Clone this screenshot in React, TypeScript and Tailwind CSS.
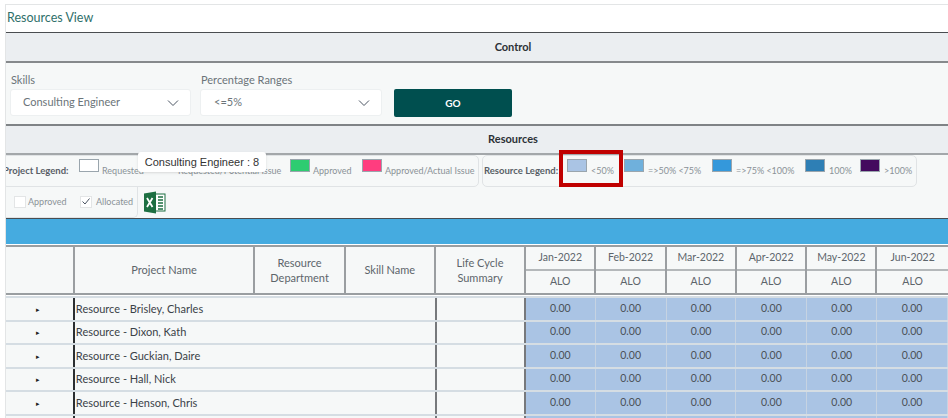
const months = ["Jan-2022", "Feb-2022", "Mar-2022", "Apr-2022", "May-2022", "Jun-2022"];
const resources = ["Brisley, Charles", "Dixon, Kath", "Guckian, Daire", "Hall, Nick", "Henson, Chris", ""];
const monthWidths = ["w-[70px]", "w-[71px]", "w-[70px]", "w-[71px]", "w-[70px]", "w-[71px]"];

function Chevron() {
  return (
    <svg width="12" height="8" viewBox="0 0 12 8" fill="none" stroke="#4b5563" strokeWidth="1">
      <path d="M1 1.5 6 6.5 11 1.5" />
    </svg>
  );
}

function Select({ label, value, width, pad }: { label: string; value: string; width: string; pad: string }) {
  return (
    <div className={`${width} flex flex-col`}>
      <span className="text-[11px] leading-[16px] text-[#6b7479] pl-px">{label}</span>
      <div className={`h-[27px] mt-px bg-white rounded-[3px] border border-[#edf0f1] flex items-center justify-between ${pad} pr-[11px] text-[11px] text-[#6b7479]`}>
        <span>{value}</span>
        <Chevron />
      </div>
    </div>
  );
}

function Swatch({ color, label, width, gap }: { color: string; label: string; width: string; gap: string }) {
  return (
    <div className={`flex items-start shrink-0 ${width} ${gap}`}>
      <span className="w-5 h-[13px] shrink-0 border border-[#9aa5ad]" style={{ backgroundColor: color }} />
      <span className="text-[9px] leading-[13px] mt-[5px] text-[#8a9297] whitespace-nowrap">{label}</span>
    </div>
  );
}

function ExcelIcon() {
  return (
    <svg width="23" height="23" viewBox="0 0 23 23">
      <rect x="8" y="3" width="14" height="17" fill="#fff" stroke="#1d6f42" strokeWidth="1" />
      <path d="M15 6h5M15 9h5M15 12h5M15 15h5M15 18h5" stroke="#1d6f42" strokeWidth="1.6" />
      <path d="M10 6h3M10 9h3M10 12h3M10 15h3M10 18h3" stroke="#1d6f42" strokeWidth="1.6" />
      <path d="M1 2.5 13 0.5V22.5L1 20.5Z" fill="#1d6f42" />
      <path d="M4 7 9.5 16M9.5 7 4 16" stroke="#fff" strokeWidth="1.8" />
    </svg>
  );
}

function SectionBar({ title, top }: { title: string; top: string }) {
  return (
    <div className={`h-[29px] bg-[#ebeef1] border-t ${top} flex items-center justify-center pl-[72px] text-[11px] font-bold text-[#2b3136]`}>
      {title}
    </div>
  );
}

export default function App() {
  return (
    <div className="w-[948px] h-[418px] overflow-hidden bg-white pt-1 pl-[6px] relative font-['Lato',sans-serif]">
      <div className="border-t border-l border-[#e3e5e6] -ml-px">
        <div className="h-[27px] flex items-center pl-px text-[12.5px] text-[#2f6f6a]">Resources View</div>
        <SectionBar title="Control" top="border-[#4a4d50]" />

        <div className="h-[63px] bg-[#f6f8f8] border-t-2 border-[#86898c] flex items-start pl-[4px] pt-[9px]">
          <Select label="Skills" value="Consulting Engineer" width="w-[181px]" pad="pl-3" />
          <div className="w-[9px]" />
          <Select label="Percentage Ranges" value="<=5%" width="w-[182px]" pad="pl-[13px]" />
          <div className="w-[12px]" />
          <div className="w-[118px] h-[28px] mt-[17px] bg-[#004f4f] rounded-[2px] flex items-center justify-center text-[10px] font-bold text-white">GO</div>
        </div>

        <SectionBar title="Resources" top="border-t-2 border-[#7f8386]" />

        <div className="h-[65px] bg-[#f6f8f8] border-t-2 border-[#a3a7aa] overflow-hidden">
          <div className="flex h-[32px] -ml-[4px]">
            <div className="w-[477px] shrink-0 border border-[#e0e3e5] rounded-[5px] flex items-start pt-[3px]">
              <span className="text-[9.5px] font-bold text-[#596067] mt-[5px] w-[76px] leading-[13px] whitespace-nowrap">Project Legend:</span>
              <Swatch color="#ffffff" label="Requested" gap="gap-[3px]" width="w-[76px]" />
              <Swatch color="#ffffff" label="Requested/Potential Issue" gap="gap-[3px]" width="w-[135px]" />
              <Swatch color="#2ecc71" label="Approved" gap="gap-[3px]" width="w-[72px]" />
              <Swatch color="#ff3d7f" label="Approved/Actual Issue" gap="gap-[3px]" width="w-[112px]" />
            </div>
            <div className="w-[435px] shrink-0 ml-[3px] border border-[#e0e3e5] rounded-[5px] flex items-start pl-px pt-[3px]">
              <span className="text-[9.5px] font-bold text-[#596067] mt-[5px] w-[83px] leading-[13px] whitespace-nowrap">Resource Legend:</span>
              <Swatch color="#aac4e4" label="<50%" gap="gap-[4px]" width="w-[57px]" />
              <Swatch color="#6fb0dc" label="=>50% <75%" gap="gap-[4px]" width="w-[88px]" />
              <Swatch color="#3498db" label="=>75% <100%" gap="gap-[4px]" width="w-[93px]" />
              <Swatch color="#2e7fb5" label="100%" gap="gap-[4px]" width="w-[55px]" />
              <Swatch color="#440a5e" label=">100%" gap="gap-[4px]" width="w-[50px]" />
            </div>
          </div>
          <div className="flex items-center h-[31px]">
            <div className="w-[132px] h-[32px] -mt-px border-r border-b border-[#e0e3e5] rounded-br-[5px] flex items-center pl-[8px] text-[9px] text-[#8a9297]">
              <span className="w-[12px] h-[12px] bg-white border border-[#e3e5e6]" />
              <span className="ml-[2px] w-[52px]">Approved</span>
              <span className="w-[12px] h-[12px] bg-white border border-[#e3e5e6] flex items-center justify-center">
                <svg width="8" height="7" viewBox="0 0 8 7" fill="none" stroke="#4b5563" strokeWidth="1">
                  <path d="M0.5 3.5 3 6 7.5 0.5" />
                </svg>
              </span>
              <span className="ml-[4px]">Allocated</span>
            </div>
            <div className="ml-[5px]">
              <ExcelIcon />
            </div>
          </div>
        </div>

        <div className="h-[26px] bg-[#45abe0] border-t border-[#4a4d50]" />

        <div className="flex h-[50px] bg-[#f6f8f8] border-t-2 border-b-2 border-[#9a9ea1] text-[11px] leading-[15.5px] text-[#5d656b] text-center mt-px">
          <div className="w-[69px] border-r-2 border-[#9a9ea1]" />
          <div className="w-[181px] border-r-2 border-[#9a9ea1] flex items-center justify-center">Project Name</div>
          <div className="w-[91px] border-r-2 border-[#9a9ea1] flex items-center justify-center">Resource<br />Department</div>
          <div className="w-[90px] border-r-2 border-[#9a9ea1] flex items-center justify-center">Skill Name</div>
          <div className="w-[91px] border-r-2 border-[#9a9ea1] flex items-center justify-center">Life Cycle<br />Summary</div>
          {months.map((m, i) => (
            <div key={m} className={`${monthWidths[i]} border-r-2 border-[#9a9ea1] flex flex-col text-[10.5px] last:border-r-0`}>
              <div className="h-[24px] border-b-2 border-[#b4b8ba] flex items-center justify-center">{m}</div>
              <div className="flex-1 flex items-center justify-center">ALO</div>
            </div>
          ))}
        </div>

        <div className="mt-px">
          {resources.map((name, r) => (
            <div key={r} className="flex h-[23.5px] bg-[#f6f8f8] border-t-2 border-[#d5dde3] text-[11px] text-[#3b4248]">
              <div className="w-[69px] border-r-2 border-[#2b2e31] flex items-center justify-center pr-[2px]">
                <span className="text-[7px] text-[#222]">▸</span>
              </div>
              <div className="w-[361px] pl-px flex items-center whitespace-nowrap">{name ? `Resource - ${name}` : ""}</div>
              <div className="w-[91px] border-l-2 border-r-2 border-[#77797c]" />
              {months.map((m, i) => (
                <div key={m} className={`${monthWidths[i]} bg-[#aac4e4] border-r border-[#c6d3e2] flex items-center justify-center text-[10.5px] text-[#4a5157]`}>
                  {name ? "0.00" : ""}
                </div>
              ))}
            </div>
          ))}
        </div>
      </div>

      <div className="absolute left-[138px] top-[152px] w-[128px] h-[20px] bg-white rounded-[3px] shadow-sm flex items-center justify-center text-[11px] text-[#333] font-['Liberation_Sans',sans-serif] whitespace-nowrap">
        Consulting Engineer : 8
      </div>
      <div className="absolute left-[559px] top-[150px] w-[64px] h-[37px] border-[4px] border-[#c00000]" />
    </div>
  );
}
